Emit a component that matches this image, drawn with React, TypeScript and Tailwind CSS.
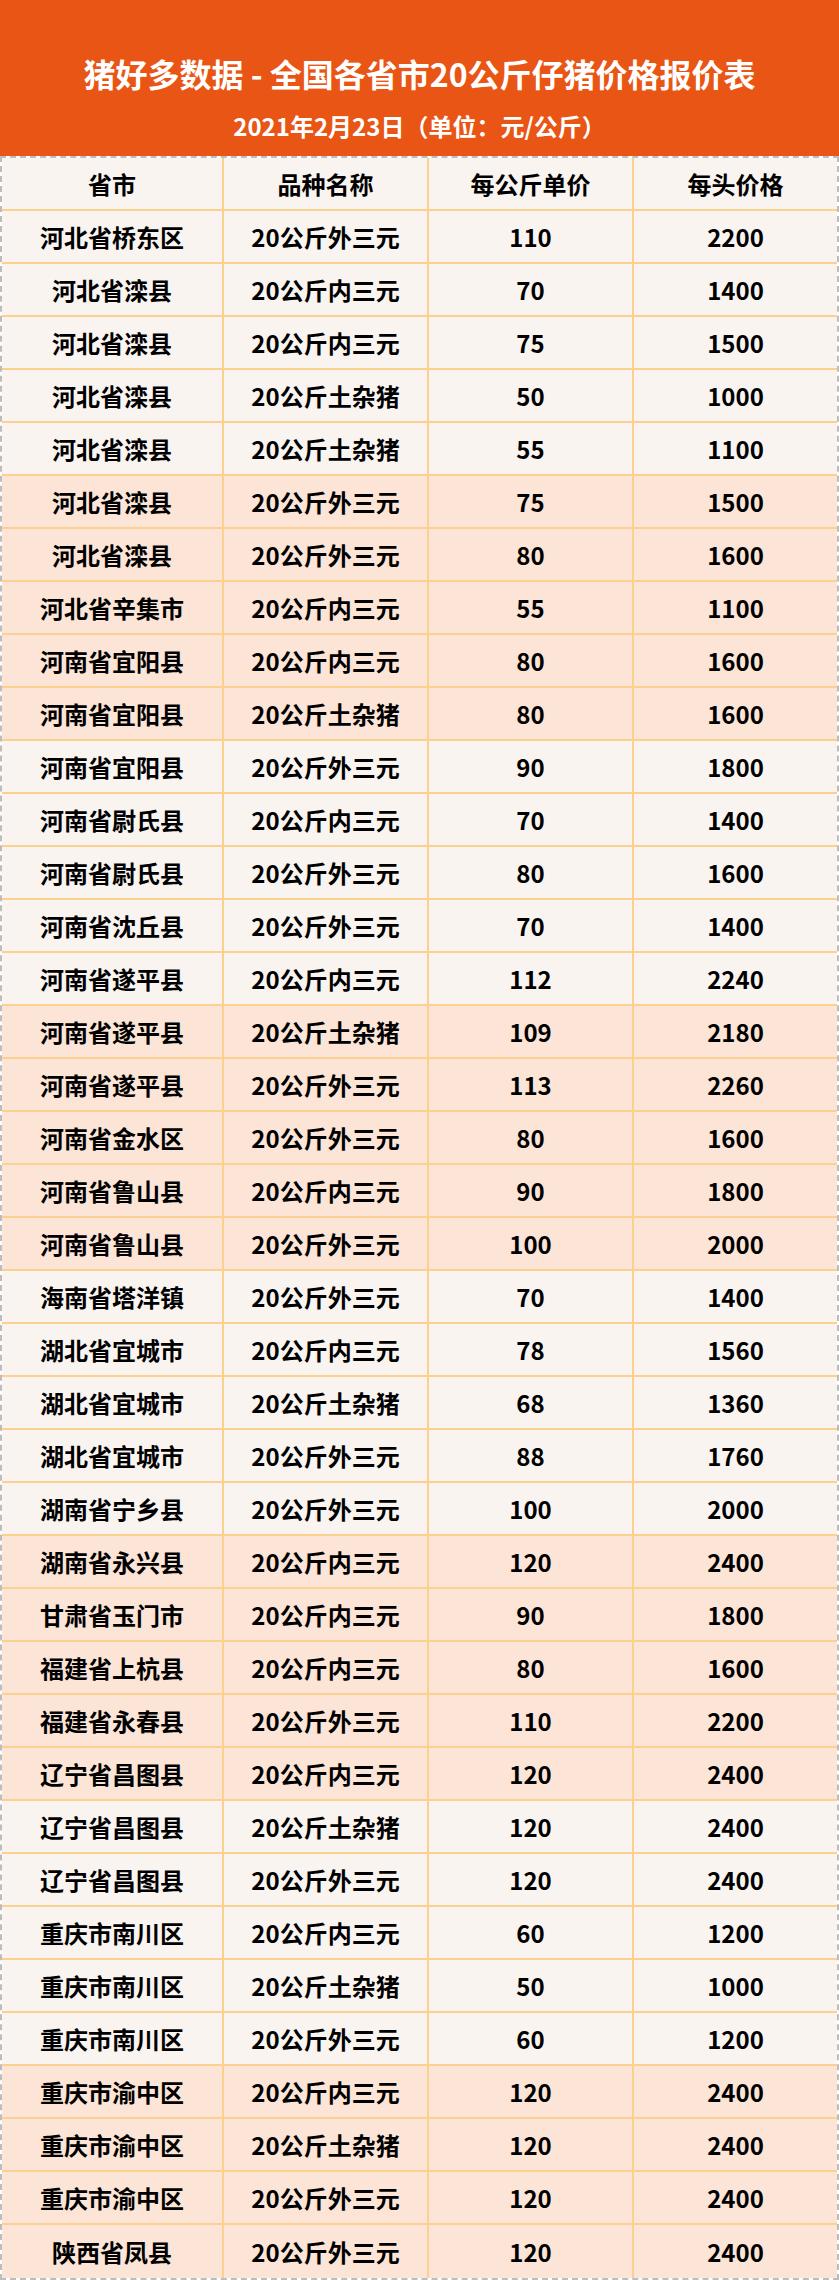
type Row = [string, string, number, number]

const rows: Row[] = [
  ["河北省桥东区", "20公斤外三元", 110, 2200],
  ["河北省滦县", "20公斤内三元", 70, 1400],
  ["河北省滦县", "20公斤内三元", 75, 1500],
  ["河北省滦县", "20公斤土杂猪", 50, 1000],
  ["河北省滦县", "20公斤土杂猪", 55, 1100],
  ["河北省滦县", "20公斤外三元", 75, 1500],
  ["河北省滦县", "20公斤外三元", 80, 1600],
  ["河北省辛集市", "20公斤内三元", 55, 1100],
  ["河南省宜阳县", "20公斤内三元", 80, 1600],
  ["河南省宜阳县", "20公斤土杂猪", 80, 1600],
  ["河南省宜阳县", "20公斤外三元", 90, 1800],
  ["河南省尉氏县", "20公斤内三元", 70, 1400],
  ["河南省尉氏县", "20公斤外三元", 80, 1600],
  ["河南省沈丘县", "20公斤外三元", 70, 1400],
  ["河南省遂平县", "20公斤内三元", 112, 2240],
  ["河南省遂平县", "20公斤土杂猪", 109, 2180],
  ["河南省遂平县", "20公斤外三元", 113, 2260],
  ["河南省金水区", "20公斤外三元", 80, 1600],
  ["河南省鲁山县", "20公斤内三元", 90, 1800],
  ["河南省鲁山县", "20公斤外三元", 100, 2000],
  ["海南省塔洋镇", "20公斤外三元", 70, 1400],
  ["湖北省宜城市", "20公斤内三元", 78, 1560],
  ["湖北省宜城市", "20公斤土杂猪", 68, 1360],
  ["湖北省宜城市", "20公斤外三元", 88, 1760],
  ["湖南省宁乡县", "20公斤外三元", 100, 2000],
  ["湖南省永兴县", "20公斤内三元", 120, 2400],
  ["甘肃省玉门市", "20公斤内三元", 90, 1800],
  ["福建省上杭县", "20公斤内三元", 80, 1600],
  ["福建省永春县", "20公斤外三元", 110, 2200],
  ["辽宁省昌图县", "20公斤内三元", 120, 2400],
  ["辽宁省昌图县", "20公斤土杂猪", 120, 2400],
  ["辽宁省昌图县", "20公斤外三元", 120, 2400],
  ["重庆市南川区", "20公斤内三元", 60, 1200],
  ["重庆市南川区", "20公斤土杂猪", 50, 1000],
  ["重庆市南川区", "20公斤外三元", 60, 1200],
  ["重庆市渝中区", "20公斤内三元", 120, 2400],
  ["重庆市渝中区", "20公斤土杂猪", 120, 2400],
  ["重庆市渝中区", "20公斤外三元", 120, 2400],
  ["陕西省凤县", "20公斤外三元", 120, 2400]
]

const font = { fontFamily: '"Noto Sans CJK SC", "Noto Sans", sans-serif' }

const Cell = ({ children, last }: { children: React.ReactNode; last?: boolean }) => (
  <div
    className={`flex items-center justify-center text-[24px] font-bold text-black ${last ? "" : "border-r-2 border-[#fcd18f]"}`}>
    {children}
  </div>
)

const TableRow = ({ cells, pink, last }: { cells: (string | number)[]; pink?: boolean; last?: boolean }) => (
  <div
    className={`grid h-[53px] grid-cols-[222px_205px_205px_1fr] ${pink ? "bg-[#fce4d6]" : "bg-[#f9f4f0]"} ${last ? "" : "border-b-2 border-[#fcd18f]"}`}>
    {cells.map((c, i) => (
      <Cell key={i} last={i === 3}>
        {c}
      </Cell>
    ))}
  </div>
)

export default function App() {
  return (
    <div className="w-[839px] leading-none" style={font}>
      <header className="flex h-[156px] flex-col items-center bg-[#e95514] pt-[52px] text-white">
        <h1 className="text-[32px] leading-[42px] font-bold">猪好多数据 - 全国各省市20公斤仔猪价格报价表</h1>
        <p className="mt-[17px] text-[24px] leading-[30px] font-bold">2021年2月23日（单位：元/公斤）</p>
      </header>
      <div className="border-x-2 border-y-2 border-dashed border-[#bdbdbd]">
        <TableRow cells={["省市", "品种名称", "每公斤单价", "每头价格"]} />
        {rows.map((r, i) => (
          <TableRow key={i} cells={r} pink={Math.floor(i / 5) % 2 === 1} last={i === rows.length - 1} />
        ))}
      </div>
    </div>
  )
}
